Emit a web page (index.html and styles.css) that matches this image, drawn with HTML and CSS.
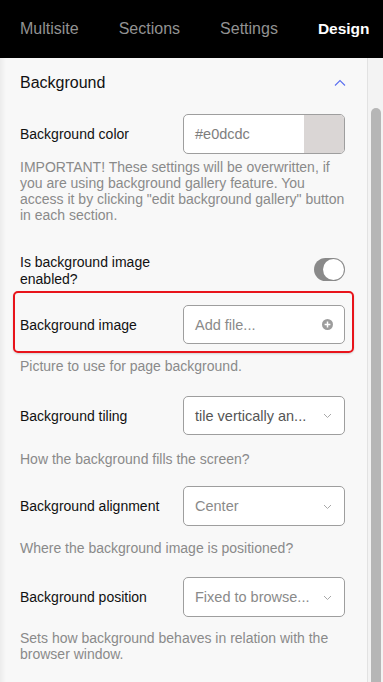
FILE: index.html
```html
<!DOCTYPE html>
<html>
<head>
<meta charset="utf-8">
<link rel="stylesheet" href="styles.css">
</head>
<body>
<nav class="tabs">
  <span class="tab">Multisite</span>
  <span class="tab">Sections</span>
  <span class="tab">Settings</span>
  <span class="tab active">Design</span>
</nav>
<div class="main">
  <div class="content">
    <div class="section-head">
      <span class="section-title">Background</span>
      <svg class="chev-up" width="12" height="8" viewBox="0 0 12 8"><path d="M1 6.5 L6 1.5 L11 6.5" fill="none" stroke="#5a6ff0" stroke-width="1.1"/></svg>
    </div>

    <div class="row row-color">
      <span class="label">Background color</span>
      <div class="control color-input">
        <span class="value">#e0dcdc</span>
        <span class="swatch"></span>
      </div>
    </div>
    <p class="help help-important">IMPORTANT! These settings will be overwritten, if you are using background gallery feature. You access it by clicking "edit background gallery" button in each section.</p>

    <div class="row row-toggle">
      <span class="label label-wrap">Is background image enabled?</span>
      <span class="toggle"><span class="knob"></span></span>
    </div>

    <div class="highlight">
      <div class="row">
        <span class="label">Background image</span>
        <div class="control file-input">
          <span class="value placeholder">Add file...</span>
          <svg class="plus" width="11" height="11" viewBox="0 0 11 11"><circle cx="5.5" cy="5.5" r="5.5" fill="#9c9c9c"/><path d="M5.5 2.6 V8.4 M2.6 5.5 H8.4" stroke="#fff" stroke-width="1.5"/></svg>
        </div>
      </div>
    </div>
    <p class="help help-picture">Picture to use for page background.</p>

    <div class="row row-tiling">
      <span class="label">Background tiling</span>
      <div class="control select">
        <span class="value selected">tile vertically an...</span>
        <svg class="chev-down" width="9" height="6" viewBox="0 0 9 6"><path d="M1 1 L4.5 4.5 L8 1" fill="none" stroke="#a8a8a8" stroke-width="1"/></svg>
      </div>
    </div>
    <p class="help help-tiling">How the background fills the screen?</p>

    <div class="row row-align">
      <span class="label">Background alignment</span>
      <div class="control select">
        <span class="value placeholder">Center</span>
        <svg class="chev-down" width="9" height="6" viewBox="0 0 9 6"><path d="M1 1 L4.5 4.5 L8 1" fill="none" stroke="#a8a8a8" stroke-width="1"/></svg>
      </div>
    </div>
    <p class="help help-align">Where the background image is positioned?</p>

    <div class="row row-position">
      <span class="label">Background position</span>
      <div class="control select">
        <span class="value placeholder">Fixed to browse...</span>
        <svg class="chev-down" width="9" height="6" viewBox="0 0 9 6"><path d="M1 1 L4.5 4.5 L8 1" fill="none" stroke="#a8a8a8" stroke-width="1"/></svg>
      </div>
    </div>
    <p class="help help-position">Sets how background behaves in relation with the browser window.</p>
  </div>
  <div class="scrollbar"><div class="thumb"></div></div>
</div>
</body>
</html>
```

FILE: styles.css
```css
* { box-sizing: border-box; }
html, body { margin: 0; padding: 0; }
body {
  width: 383px;
  height: 682px;
  overflow: hidden;
  background: #f8f8f8;
  font-family: "Liberation Sans", Arial, sans-serif;
  color: #111;
}
.tabs {
  height: 58px;
  background: #000;
  display: flex;
  align-items: center;
  gap: 40px;
  padding-left: 20px;
}
.tab {
  font-size: 16px;
  color: #929292;
}
.tab.active {
  color: #fff;
  font-weight: bold;
  font-size: 15.5px;
}
.main {
  display: flex;
  height: 624px;
}
.content {
  flex: 1;
  padding: 0 22px 0 20px;
  background: linear-gradient(to right, #ececec 0px, #f8f8f8 6px);
}
.section-head {
  height: 50px;
  display: flex;
  align-items: center;
  justify-content: space-between;
}
.section-title { font-size: 16px; }
.chev-up { margin-right: -1px; }
.row {
  display: flex;
  align-items: center;
  justify-content: space-between;
}
.label { font-size: 14px; }
.label-wrap { max-width: 165px; line-height: 17px; }
.control {
  width: 162px;
  height: 40px;
  background: #fff;
  border: 1px solid #9e9e9e;
  border-radius: 5px;
  display: flex;
  align-items: center;
  padding-left: 11px;
  font-size: 14.5px;
  overflow: hidden;
}
.value { flex: 1; color: #7e7e7e; }
.value.placeholder { color: #8a8a8a; }
.value.selected { color: #555; }
.color-input { padding-right: 0; }
.swatch {
  width: 40px;
  height: 100%;
  background: #dad6d5;
}
.file-input { padding-right: 11px; }
.select { padding-right: 12px; }
.chev-down { margin-top: 1px; }
.row-color { margin-top: 6px; }
.help {
  margin: 0;
  font-size: 14px;
  line-height: 16px;
  color: #8a8a8a;
}
.help-important { margin-top: 5px; }
.row-toggle { margin-top: 31px; }
.toggle {
  width: 31px;
  height: 23px;
  border-radius: 12px;
  background: #8a8a8a;
  display: flex;
  align-items: center;
  justify-content: flex-end;
  padding-right: 1px;
  margin-top: -4px;
  margin-right: 0px;
}
.knob {
  width: 21px;
  height: 21px;
  border-radius: 50%;
  background: #fff;
}
.highlight {
  margin: 3px -9px 0 -7px;
  border: 2px solid #e8141b;
  border-radius: 5px;
  padding: 12px 7px 7px 5px;
  box-shadow: 0 1px 2px rgba(0,0,0,0.15);
}
.highlight .control { height: 39px; }
.help-picture { margin-top: 5px; }
.row-tiling { margin-top: 22px; }
.row-tiling .control { height: 39px; }
.help-tiling { margin-top: 16px; }
.row-align { margin-top: 19px; }
.help-align { margin-top: 14px; }
.row-position { margin-top: 21px; }
.help-position { margin-top: 13px; }
.scrollbar {
  width: 16px;
  background: #f3f3f3;
  border-left: 1px solid #e2e2e2;
  padding-top: 50px;
  padding-left: 3px;
}
.thumb {
  width: 10px;
  height: 100%;
  background: #b6b6b6;
  border-radius: 5px 5px 0 0;
}
```
